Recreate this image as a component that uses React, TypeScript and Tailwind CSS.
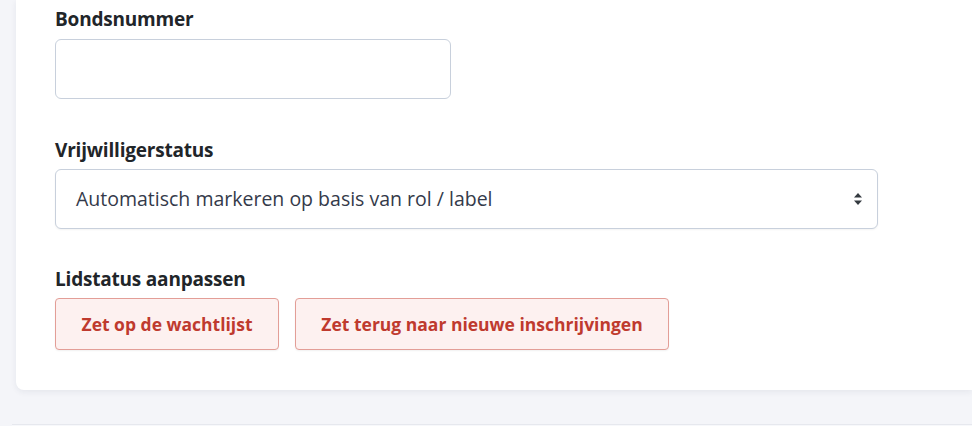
const font = { fontFamily: "'Open Sans', 'Noto Sans', sans-serif" };

function SortArrows() {
  return (
    <svg width="10" height="14" viewBox="0 0 10 14" className="text-[#343a40]">
      <path d="M5 1 L9 5.5 H1 Z" fill="currentColor" />
      <path d="M5 13 L9 8.5 H1 Z" fill="currentColor" />
    </svg>
  );
}

export default function App() {
  return (
    <main
      className="w-[972px] h-[426px] overflow-hidden bg-[#f4f5f9]"
      style={font}
    >
      <div className="ml-4 rounded-bl-lg bg-white shadow-[0_2px_6px_rgba(30,40,70,0.07)] pl-[39px] pr-10 pt-[6px] pb-[40px]">
        {/* Bondsnummer */}
        <label className="block text-[19px] leading-[27px] font-bold text-[#212529] mb-[6px] tracking-[-0.2px]">
          Bondsnummer
        </label>
        <input
          type="text"
          className="block w-[396px] h-[60px] rounded-md border border-[#c8d0dc] bg-white px-5 text-[18px] outline-none"
        />

        {/* Vrijwilligerstatus */}
        <label className="block text-[19px] leading-[27px] font-bold text-[#212529] mt-[38px] mb-[5px] tracking-[-0.2px]">
          Vrijwilligerstatus
        </label>
        <div className="flex items-center justify-between w-[823px] h-[60px] rounded-md border border-[#c8d0dc] bg-white pl-5 pr-[14px] shadow-[0_1px_2px_rgba(0,0,0,0.05)]">
          <span className="text-[19.5px] text-[#343a4a]">
            Automatisch markeren op basis van rol / label
          </span>
          <SortArrows />
        </div>

        {/* Lidstatus */}
        <label className="block text-[19px] leading-[27px] font-bold text-[#212529] mt-[37px] mb-[5px] tracking-[-0.2px]">
          Lidstatus aanpassen
        </label>
        <div className="flex gap-4">
          <button className="h-[52px] w-[224px] rounded border border-[#e39e97] bg-[#fdf1f0] text-[17.5px] font-bold text-[#bf3a2e] shadow-[0_1px_2px_rgba(0,0,0,0.06)]">
            Zet op de wachtlijst
          </button>
          <button className="h-[52px] w-[374px] rounded border border-[#e39e97] bg-[#fdf1f0] text-[17.5px] font-bold text-[#bf3a2e] shadow-[0_1px_2px_rgba(0,0,0,0.06)]">
            Zet terug naar nieuwe inschrijvingen
          </button>
        </div>
      </div>
      <div className="mt-[34px] ml-3 h-4 border-t border-[#e6e8ee] bg-[#f7f8fb]" />
    </main>
  );
}
